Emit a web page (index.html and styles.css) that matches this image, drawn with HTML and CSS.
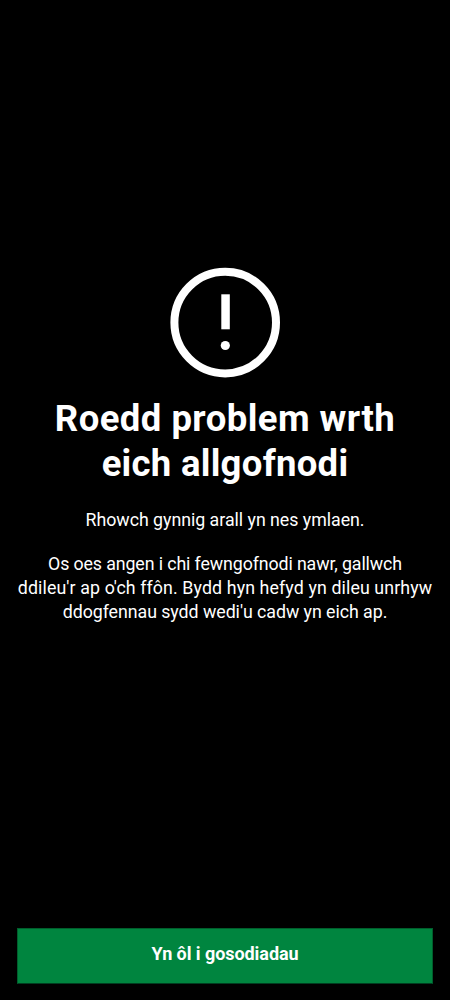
FILE: index.html
```
<!DOCTYPE html>
<html lang="cy">
<head>
<meta charset="utf-8">
<title>Roedd problem wrth eich allgofnodi</title>
<link rel="stylesheet" href="styles.css">
</head>
<body>
<main class="screen">
  <section class="message">
    <svg class="icon" viewBox="0 0 110 111" aria-hidden="true">
      <circle class="ring" cx="55.2" cy="55.6" r="50.8"/>
      <rect class="mark" x="51.3" y="27.3" width="8.5" height="35"/>
      <circle class="mark" cx="55.3" cy="78.5" r="4.6"/>
    </svg>
    <h1 class="title"><span class="line t1">Roedd problem wrth</span><span class="line t2">eich allgofnodi</span></h1>
    <p class="text"><span class="line b1">Rhowch gynnig arall yn nes ymlaen.</span></p>
    <p class="text"><span class="line b2">Os oes angen i chi fewngofnodi nawr, gallwch</span><span class="line b3">ddileu'r ap o'ch ffôn. Bydd hyn hefyd yn dileu unrhyw</span><span class="line b4">ddogfennau sydd wedi'u cadw yn eich ap.</span></p>
  </section>
  <button class="button" type="button">Yn ôl i gosodiadau</button>
</main>
</body>
</html>
```
FILE: styles.css
```
* { box-sizing: border-box; }
body { margin: 0; background: #000; color: #fff; font-family: Roboto, sans-serif; }
.screen { height: 1000px; padding: 267px 17px 16px; display: flex; flex-direction: column; justify-content: space-between; }
.message { display: flex; flex-direction: column; align-items: center; text-align: center; }
.icon { width: 110px; height: 111px; }
.ring { fill: none; stroke: #fff; stroke-width: 8; }
.mark { fill: #fff; }
.line { display: block; white-space: nowrap; }
.title { margin: 18px 0 22px; font: 700 36.5px/45px Roboto, sans-serif; }
.t1 { letter-spacing: 0.45px; }
.t2 { letter-spacing: 0.28px; }
.text { margin: 0 0 20px; font-size: 17.8px; line-height: 24px; }
.b1 { letter-spacing: -0.03px; }
.b2 { letter-spacing: -0.11px; }
.b3 { letter-spacing: 0.11px; }
.b4 { letter-spacing: -0.05px; }
.button { height: 56px; border: 1px solid #005e2c; border-bottom-color: #003e20; background: #00853f; color: #fff; font: 700 18px/24px Roboto, sans-serif; letter-spacing: -0.06px; padding: 0 0 4px; }
```
